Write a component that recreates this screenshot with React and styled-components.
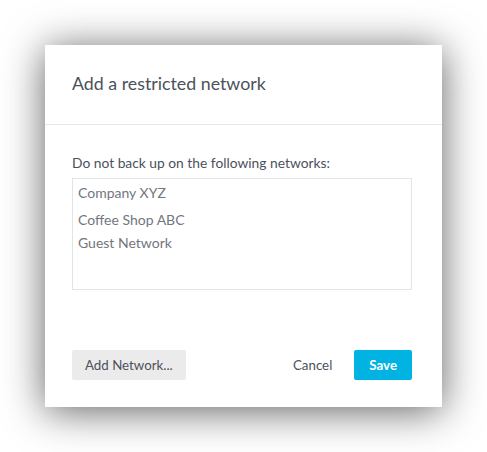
import React from "react";
import styled, { createGlobalStyle } from "styled-components";

const Global = createGlobalStyle`
  html, body { margin: 0; padding: 0; background: #ffffff; }
  body { font-family: "Lato", "Open Sans", sans-serif; -webkit-font-smoothing: antialiased; }
`;

const Page = styled.div`
  padding: 45px 0 45px 45px;
  min-height: 100vh;
  box-sizing: border-box;
`;

const Dialog = styled.div`
  width: 397px;
  background: #ffffff;
  box-shadow: 0 4px 38px rgba(0, 0, 0, 0.62);
`;

const Header = styled.div`
  height: 80px;
  display: flex;
  align-items: center;
  padding: 0 27px 4px;
  border-bottom: 1px solid #e6e7e9;
  box-sizing: border-box;
`;

const Title = styled.h2`
  margin: 0;
  font-size: 17.8px;
  font-weight: 400;
  color: #4c515b;
`;

const Body = styled.div`
  padding: 30px 30px 0 27px;
`;

const Label = styled.div`
  font-size: 13.8px;
  line-height: 16px;
  color: #4c515b;
  margin-bottom: 7px;
`;

const ListBox = styled.ul`
  list-style: none;
  margin: 0;
  padding: 5px 5px 0;
  height: 112px;
  box-sizing: border-box;
  border: 1px solid #e3e4e6;
`;

const Item = styled.li`
  font-size: 14px;
  line-height: 17px;
  color: #72767e;
  margin-top: ${(p) => p.$gap}px;
`;

const Footer = styled.div`
  display: flex;
  align-items: center;
  padding: 60px 30px 27px 27px;
`;

const Spacer = styled.div`
  flex: 1;
`;

const Button = styled.button`
  font-family: inherit;
  font-size: 13.3px;
  height: 30px;
  border: none;
  border-radius: 2px;
  cursor: pointer;
  padding: 0 ${(p) => p.$px}px;
  margin-left: ${(p) => p.$ml || 0}px;
  background: ${(p) => p.$bg};
  color: ${(p) => p.$color};
  font-weight: ${(p) => p.$weight};
`;

export default function App() {
  return (
    <>
      <Global />
      <Page>
        <Dialog>
          <Header>
            <Title>Add a restricted network</Title>
          </Header>
          <Body>
            <Label>Do not back up on the following networks:</Label>
            <ListBox>
              <Item $gap={0}>Company XYZ</Item>
              <Item $gap={10}>Coffee Shop ABC</Item>
              <Item $gap={6}>Guest Network</Item>
            </ListBox>
          </Body>
          <Footer>
            <Button $px={13} $bg="#ebebeb" $color="#4c515b" $weight={400}>Add Network...</Button>
            <Spacer />
            <Button $px={12} $bg="transparent" $color="#4c515b" $weight={400}>Cancel</Button>
            <Button $px={15} $ml={10} $bg="#00b3e3" $color="#ffffff" $weight={700}>Save</Button>
          </Footer>
        </Dialog>
      </Page>
    </>
  );
}
